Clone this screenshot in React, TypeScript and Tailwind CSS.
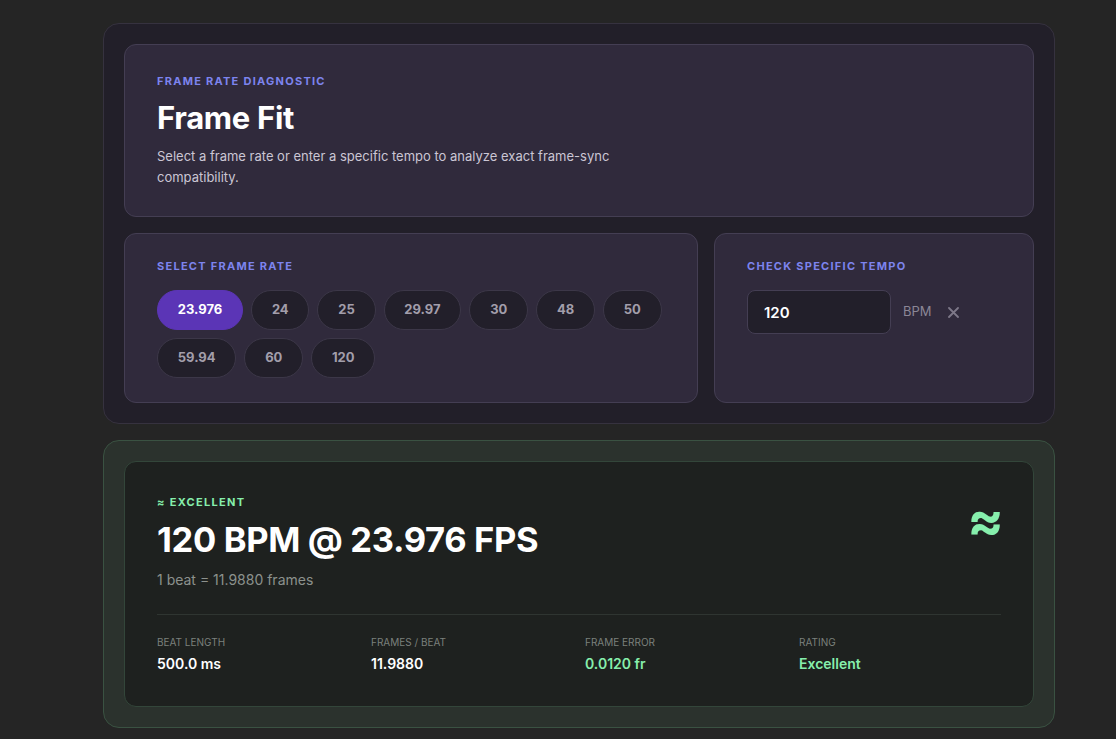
import React, { useState } from 'react';

const RATES = ['23.976', '24', '25', '29.97', '30', '48', '50', '59.94', '60', '120'];

const Label: React.FC<{ children: React.ReactNode; className?: string }> = ({ children, className = '' }) => (
  <div className={`text-[11px] leading-4 font-bold uppercase tracking-[0.115em] text-[#7d84ee] ${className}`}>{children}</div>
);

const Stat: React.FC<{ label: string; value: string; green?: boolean }> = ({ label, value, green }) => (
  <div>
    <div className="text-[10px] leading-[14px] uppercase text-[#7b807c]">{label}</div>
    <div className={`mt-[5px] text-sm leading-5 font-semibold ${green ? 'text-[#86efac]' : 'text-white'}`}>{value}</div>
  </div>
);

const App: React.FC = () => {
  const [rate, setRate] = useState('23.976');
  const [bpm, setBpm] = useState('120');

  return (
    <div className="min-h-screen bg-[#252525] font-['Inter',sans-serif] pt-[23px] pb-8">
      <div className="ml-[103px] w-[952px] flex flex-col gap-4">
        {/* Controls */}
        <div className="rounded-2xl border border-[#36323f] bg-[#221f29] p-5 flex flex-col gap-4">
          <div className="rounded-xl border border-[#443e53] bg-[#302a3c] px-8 pt-7 pb-7">
            <Label>Frame Rate Diagnostic</Label>
            <h1 className="mt-[11px] text-[31px] leading-9 font-bold text-white tracking-[-0.01em]">Frame Fit</h1>
            <p className="mt-[10px] max-w-lg text-[13px] leading-[21px] text-[#cbc6d4]">
              Select a frame rate or enter a specific tempo to analyze exact frame-sync compatibility.
            </p>
          </div>

          <div className="grid grid-cols-[minmax(0,1fr)_320px] gap-4">
            <div className="rounded-xl border border-[#443e53] bg-[#302a3c] px-8 py-6">
              <Label>Select Frame Rate</Label>
              <div className="mt-4 flex flex-wrap gap-2">
                {RATES.map((r) => (
                  <button
                    key={r}
                    onClick={() => setRate(r)}
                    className={
                      r === rate
                        ? 'h-10 px-[19.8px] rounded-full bg-[#5b35b6] border border-[#5b35b6] text-[13px] font-bold text-white'
                        : 'h-10 px-[19.8px] rounded-full bg-[#221f2a] border border-[#3c3748] text-[13px] font-bold text-[#a29eab]'
                    }
                  >
                    {r}
                  </button>
                ))}
              </div>
            </div>

            <div className="rounded-xl border border-[#443e53] bg-[#302a3c] px-8 py-6">
              <Label>Check Specific Tempo</Label>
              <div className="mt-4 flex items-center gap-3">
                <input
                  value={bpm}
                  onChange={(e) => setBpm(e.target.value)}
                  className="w-[144px] h-11 rounded-lg bg-[#221f2a] border border-[#443e53] px-4 text-[15px] font-semibold text-white outline-none"
                />
                <span className="text-[13px] text-[#8b8696]">BPM</span>
                <button className="ml-1 text-[#7d7888]">
                  <svg width="11" height="11" viewBox="0 0 11 11" fill="none" stroke="currentColor" strokeWidth="1.8" strokeLinecap="round">
                    <path d="M1 1l9 9M10 1l-9 9" />
                  </svg>
                </button>
              </div>
            </div>
          </div>
        </div>

        {/* Result */}
        <div className="rounded-2xl border border-[#3a5242] bg-[#2b322d] p-5">
          <div className="rounded-xl border border-[#33463a] bg-[#1e211f] px-8 pt-8 pb-8">
            <div className="flex items-start justify-between">
              <div>
                <div className="text-[11px] leading-4 font-bold uppercase tracking-[0.12em] text-[#86efac]">≈ Excellent</div>
                <div className="mt-[10px] text-[34.5px] leading-10 font-bold text-white tracking-[-0.01em]">120 BPM @ 23.976 FPS</div>
                <div className="mt-[10px] text-sm leading-5 text-[#8c918d]">1 beat = 11.9880 frames</div>
              </div>
              <div className="-mt-[1px] -mr-[3px] text-[54px] leading-[54px] font-bold text-[#86efac]">≈</div>
            </div>
            <div className="mt-6 border-t border-[#2f3531] pt-5 grid grid-cols-4 gap-3">
              <Stat label="Beat Length" value="500.0 ms" />
              <Stat label="Frames / Beat" value="11.9880" />
              <Stat label="Frame Error" value="0.0120 fr" green />
              <Stat label="Rating" value="Excellent" green />
            </div>
          </div>
        </div>
      </div>
    </div>
  );
};

export default App;
